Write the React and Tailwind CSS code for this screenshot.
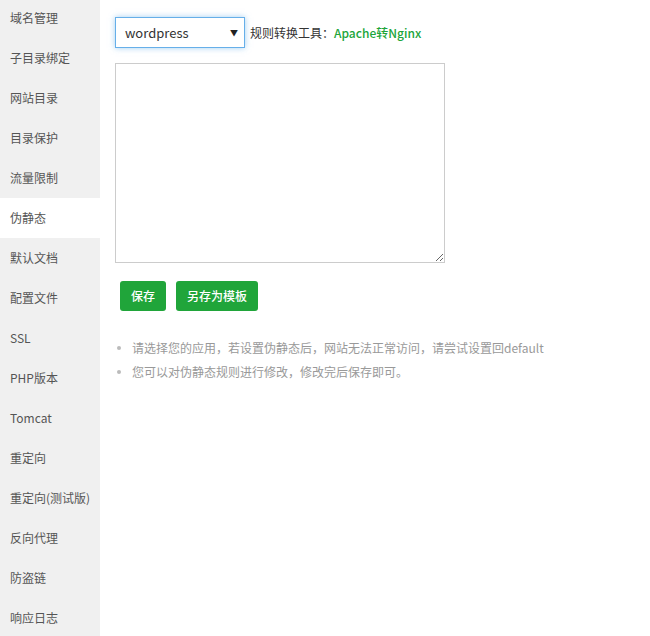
import React from "react";

const items = ["域名管理","子目录绑定","网站目录","目录保护","流量限制","伪静态","默认文档","配置文件","SSL","PHP版本","Tomcat","重定向","重定向(测试版)","反向代理","防盗链","响应日志"];

export default function App() {
  return (
    <div className="flex w-[650px] h-[636px] overflow-hidden bg-white text-[12px] text-[#333]" style={{fontFamily: '"Microsoft YaHei","Noto Sans CJK SC","Liberation Sans",sans-serif'}}>
      <div className="w-[100px] shrink-0 bg-[#f0f0f0] flex flex-col -mt-[2px]">
        {items.map((t, i) => (
          <div key={t} className={`h-[40px] shrink-0 flex items-center pl-[10px] text-[#555] ${i === 5 ? "bg-white" : ""}`}>{t}</div>
        ))}
      </div>
      <div className="flex-1 pl-[15px] pt-[17px]">
        <div className="flex items-center">
          <div className="relative w-[130px] h-[31px] border border-[#66afe9] shadow-[0_0_6px_rgba(102,175,233,0.6)] flex items-center pl-[9px] text-[13px] text-[#333]">
            wordpress
            <span className="absolute right-[6px] top-[9px] text-[8px] text-[#222]">▼</span>
          </div>
          <span className="ml-[5px] text-[12px] text-[#333]">规则转换工具：</span>
          <span className="text-[12px] text-[#20a53a] font-medium">Apache转Nginx</span>
        </div>
        <textarea className="block mt-[15px] w-[330px] h-[200px] border border-[#ccc] outline-none resize" />
        <div className="flex gap-[10px] mt-[18px] ml-[5px]">
          <button className="h-[30px] px-[11px] rounded-[3px] bg-[#20a53a] text-white text-[12px] font-medium">保存</button>
          <button className="h-[30px] px-[11px] rounded-[3px] bg-[#20a53a] text-white text-[12px] font-medium">另存为模板</button>
        </div>
        <ul className="mt-[25px] text-[12px] text-[#999] leading-[24px]">
          <li className="flex items-center"><span className="w-[4px] h-[4px] rounded-full bg-[#bbb] ml-[2px] mr-[11px]"></span>请选择您的应用，若设置伪静态后，网站无法正常访问，请尝试设置回default</li>
          <li className="flex items-center"><span className="w-[4px] h-[4px] rounded-full bg-[#bbb] ml-[2px] mr-[11px]"></span>您可以对伪静态规则进行修改，修改完后保存即可。</li>
        </ul>
      </div>
    </div>
  );
}
